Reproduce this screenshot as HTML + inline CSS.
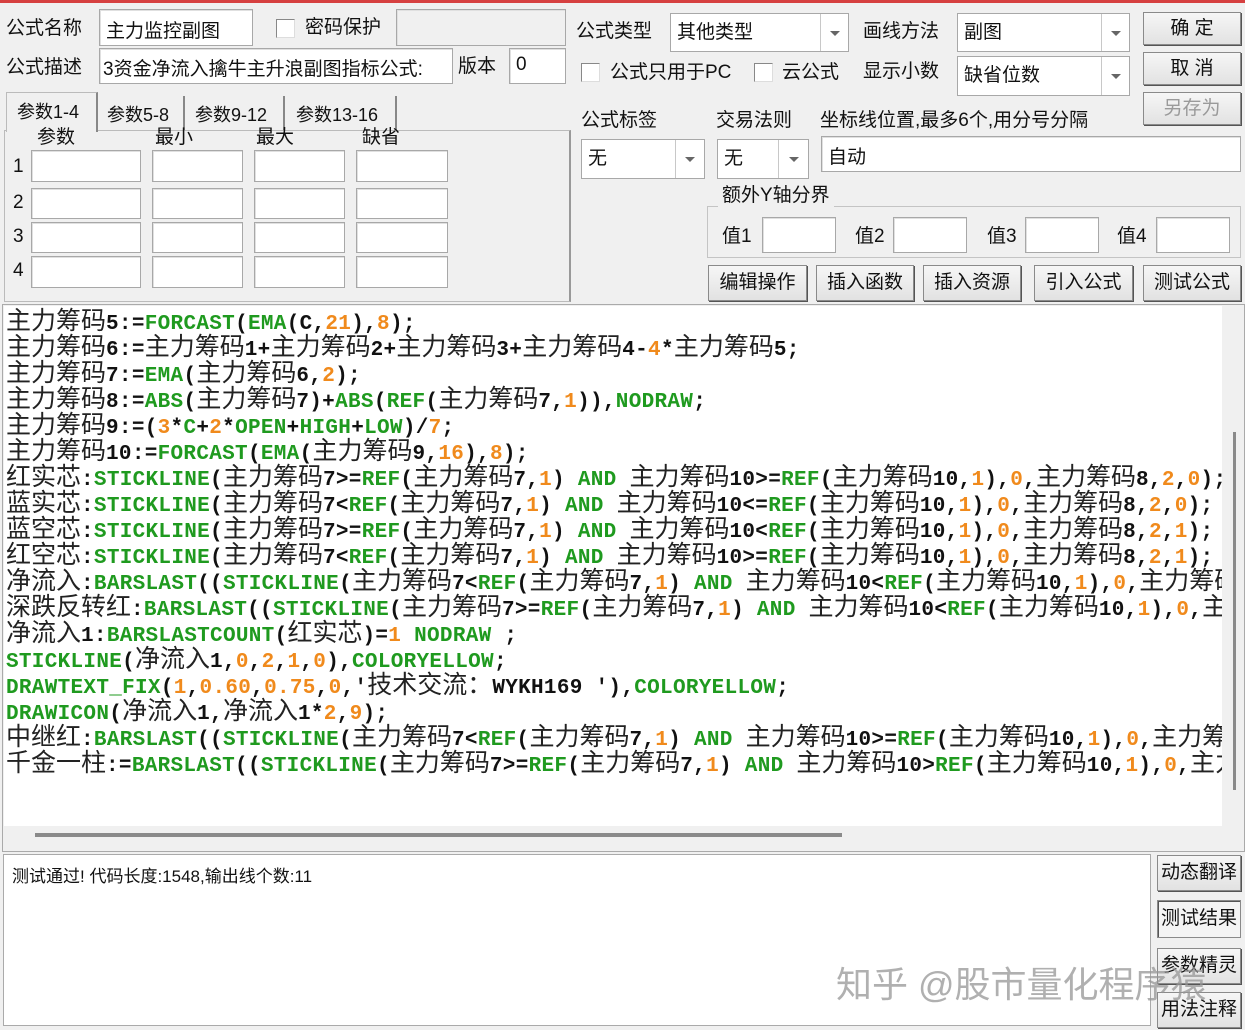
<!DOCTYPE html>
<html><head><meta charset="utf-8">
<style>
*{box-sizing:border-box;margin:0;padding:0}
body{width:1245px;height:1030px;background:#f0f0f0;font-family:"Liberation Sans","Noto Sans CJK SC",sans-serif;font-size:18px;color:#111;position:relative;overflow:hidden}
.a{position:absolute;white-space:nowrap}
.in{position:absolute;background:#fff;border:1px solid #a8a8a8;box-shadow:inset 1px 1px 0 #e0e0e0}
.lb{position:absolute;white-space:nowrap;font-size:19px;line-height:22px}
.cb{position:absolute;width:19px;height:19px;background:#fff;border:1px solid #888;border-right-color:#ddd;border-bottom-color:#ddd}
.combo{position:absolute;background:#fff;border:1px solid #a8a8a8;font-size:19px;padding-left:6px}
.combo .ar{position:absolute;right:0;top:0;bottom:0;border-left:1px solid #c8c8c8;background:#fff}
.combo .ar:after{content:"";position:absolute;left:50%;top:50%;margin:-2px 0 0 -5px;border:5px solid transparent;border-top:5px solid #666;border-bottom:0}
.btn{position:absolute;background:linear-gradient(#f6f6f6,#e2e2e2);border:1px solid #8a8a8a;box-shadow:1px 1px 0 #555;font-size:19px;text-align:center}
.code{position:absolute;left:4px;top:306px;width:1218px;height:520px;background:#fff;overflow:hidden}
.ln{height:26px;line-height:26px;white-space:nowrap;font-family:"Liberation Mono",monospace;font-weight:bold;font-size:21px;letter-spacing:.3px;color:#111;padding-left:2px}
.ln c{font-family:"Noto Sans CJK SC",sans-serif;font-weight:normal;font-size:25px;letter-spacing:0;color:#222}
.ln g{color:#1f9a1f}.ln o{color:#f08a1c}
</style></head><body>
<div class="a" style="left:0;top:0;width:1245px;height:3px;background:#d64040"></div>

<div class="lb" style="left:6px;top:18px">公式名称</div>
<div class="in" style="left:99px;top:9px;width:154px;height:37px"><span class="a" style="left:6px;top:6px;font-size:19px">主力监控副图</span></div>
<div class="cb" style="left:276px;top:19px"></div>
<div class="lb" style="left:305px;top:17px">密码保护</div>
<div class="in" style="left:396px;top:9px;width:170px;height:37px;background:#f0f0f0"></div>
<div class="lb" style="left:6px;top:57px">公式描述</div>
<div class="in" style="left:99px;top:48px;width:354px;height:36px;overflow:hidden"><span class="a" style="left:3px;top:5px;font-size:19px">3资金净流入擒牛主升浪副图指标公式:</span></div>
<div class="lb" style="left:458px;top:56px">版本</div>
<div class="in" style="left:509px;top:48px;width:57px;height:36px"><span class="a" style="left:6px;top:5px;font-size:19px">0</span></div>

<div class="a" style="left:4px;top:130px;width:567px;height:172px;border:1px solid #bbb;border-right:2px solid #999;background:#f0f0f0"></div>
<div class="a" style="left:6px;top:92px;width:92px;height:40px;background:#f0f0f0;border:1px solid #bbb;border-bottom:0;border-right:2px solid #888;font-size:18px;padding:5px 0 0 10px">参数1-4</div>
<div class="a" style="left:100px;top:96px;width:85px;height:34px;border-right:2px solid #888;font-size:18px;padding:5px 0 0 7px">参数5-8</div>
<div class="a" style="left:187px;top:96px;width:98px;height:34px;border-right:2px solid #888;font-size:18px;padding:5px 0 0 8px">参数9-12</div>
<div class="a" style="left:287px;top:96px;width:110px;height:34px;border-right:2px solid #888;font-size:18px;padding:5px 0 0 9px">参数13-16</div>
<div class="lb" style="left:37px;top:127px">参数</div>
<div class="lb" style="left:155px;top:127px">最小</div>
<div class="lb" style="left:256px;top:127px">最大</div>
<div class="lb" style="left:362px;top:127px">缺省</div>
<div class="lb" style="left:13px;top:156px">1</div>
<div class="lb" style="left:13px;top:192px">2</div>
<div class="lb" style="left:13px;top:226px">3</div>
<div class="lb" style="left:13px;top:260px">4</div>
<div class="in" style="left:31px;top:150px;width:110px;height:32px"></div><div class="in" style="left:152px;top:150px;width:91px;height:32px"></div><div class="in" style="left:254px;top:150px;width:91px;height:32px"></div><div class="in" style="left:356px;top:150px;width:92px;height:32px"></div>
<div class="in" style="left:31px;top:188px;width:110px;height:31px"></div><div class="in" style="left:152px;top:188px;width:91px;height:31px"></div><div class="in" style="left:254px;top:188px;width:91px;height:31px"></div><div class="in" style="left:356px;top:188px;width:92px;height:31px"></div>
<div class="in" style="left:31px;top:222px;width:110px;height:31px"></div><div class="in" style="left:152px;top:222px;width:91px;height:31px"></div><div class="in" style="left:254px;top:222px;width:91px;height:31px"></div><div class="in" style="left:356px;top:222px;width:92px;height:31px"></div>
<div class="in" style="left:31px;top:256px;width:110px;height:32px"></div><div class="in" style="left:152px;top:256px;width:91px;height:32px"></div><div class="in" style="left:254px;top:256px;width:91px;height:32px"></div><div class="in" style="left:356px;top:256px;width:92px;height:32px"></div>

<div class="lb" style="left:576px;top:21px">公式类型</div>
<div class="combo" style="left:670px;top:13px;width:179px;height:39px;line-height:37px">其他类型<span class="ar" style="width:28px"></span></div>
<div class="lb" style="left:863px;top:21px">画线方法</div>
<div class="combo" style="left:957px;top:13px;width:173px;height:39px;line-height:37px">副图<span class="ar" style="width:28px"></span></div>
<div class="btn" style="left:1143px;top:12px;width:98px;height:33px;line-height:31px">确 定</div>
<div class="btn" style="left:1143px;top:52px;width:98px;height:33px;line-height:31px">取 消</div>
<div class="btn" style="left:1143px;top:92px;width:98px;height:33px;line-height:31px;color:#9a9a9a">另存为</div>
<div class="cb" style="left:581px;top:63px"></div>
<div class="lb" style="left:610px;top:62px">公式只用于PC</div>
<div class="cb" style="left:754px;top:63px"></div>
<div class="lb" style="left:782px;top:62px">云公式</div>
<div class="lb" style="left:863px;top:61px">显示小数</div>
<div class="combo" style="left:957px;top:56px;width:173px;height:40px;line-height:38px">缺省位数<span class="ar" style="width:28px"></span></div>
<div class="lb" style="left:581px;top:110px">公式标签</div>
<div class="lb" style="left:716px;top:110px">交易法则</div>
<div class="lb" style="left:820px;top:110px">坐标线位置,最多6个,用分号分隔</div>
<div class="combo" style="left:581px;top:139px;width:124px;height:40px;line-height:38px">无<span class="ar" style="width:29px"></span></div>
<div class="combo" style="left:717px;top:139px;width:92px;height:40px;line-height:38px">无<span class="ar" style="width:30px"></span></div>
<div class="in" style="left:821px;top:136px;width:420px;height:36px"><span class="a" style="left:6px;top:5px;font-size:19px">自动</span></div>
<div class="a" style="left:707px;top:206px;width:534px;height:52px;border:1px solid #c4c4c4"></div>
<div class="lb" style="left:718px;top:185px;background:#f0f0f0;padding:0 4px">额外Y轴分界</div>
<div class="lb" style="left:722px;top:226px">值1</div><div class="in" style="left:762px;top:217px;width:74px;height:36px"></div>
<div class="lb" style="left:855px;top:226px">值2</div><div class="in" style="left:893px;top:217px;width:74px;height:36px"></div>
<div class="lb" style="left:987px;top:226px">值3</div><div class="in" style="left:1025px;top:217px;width:74px;height:36px"></div>
<div class="lb" style="left:1117px;top:226px">值4</div><div class="in" style="left:1156px;top:217px;width:74px;height:36px"></div>
<div class="btn" style="left:708px;top:265px;width:99px;height:36px;line-height:34px">编辑操作</div>
<div class="btn" style="left:816px;top:265px;width:98px;height:36px;line-height:34px">插入函数</div>
<div class="btn" style="left:923px;top:265px;width:98px;height:36px;line-height:34px">插入资源</div>
<div class="btn" style="left:1034px;top:265px;width:99px;height:36px;line-height:34px">引入公式</div>
<div class="btn" style="left:1143px;top:265px;width:98px;height:36px;line-height:34px">测试公式</div>

<div class="a" style="left:2px;top:304px;width:1243px;height:548px;border:1px solid #aaa;background:#f0f0f0"></div>
<div class="code">
<div class="ln"><c>主力筹码</c>5:=<g>FORCAST</g>(<g>EMA</g>(C,<o>21</o>),<o>8</o>);</div>
<div class="ln"><c>主力筹码</c>6:=<c>主力筹码</c>1+<c>主力筹码</c>2+<c>主力筹码</c>3+<c>主力筹码</c>4-<o>4</o>*<c>主力筹码</c>5;</div>
<div class="ln"><c>主力筹码</c>7:=<g>EMA</g>(<c>主力筹码</c>6,<o>2</o>);</div>
<div class="ln"><c>主力筹码</c>8:=<g>ABS</g>(<c>主力筹码</c>7)+<g>ABS</g>(<g>REF</g>(<c>主力筹码</c>7,<o>1</o>)),<g>NODRAW</g>;</div>
<div class="ln"><c>主力筹码</c>9:=(<o>3</o>*<g>C</g>+<o>2</o>*<g>OPEN</g>+<g>HIGH</g>+<g>LOW</g>)/<o>7</o>;</div>
<div class="ln"><c>主力筹码</c>10:=<g>FORCAST</g>(<g>EMA</g>(<c>主力筹码</c>9,<o>16</o>),<o>8</o>);</div>
<div class="ln"><c>红实芯</c>:<g>STICKLINE</g>(<c>主力筹码</c>7&gt;=<g>REF</g>(<c>主力筹码</c>7,<o>1</o>) <g>AND</g> <c>主力筹码</c>10&gt;=<g>REF</g>(<c>主力筹码</c>10,<o>1</o>),<o>0</o>,<c>主力筹码</c>8,<o>2</o>,<o>0</o>);</div>
<div class="ln"><c>蓝实芯</c>:<g>STICKLINE</g>(<c>主力筹码</c>7&lt;<g>REF</g>(<c>主力筹码</c>7,<o>1</o>) <g>AND</g> <c>主力筹码</c>10&lt;=<g>REF</g>(<c>主力筹码</c>10,<o>1</o>),<o>0</o>,<c>主力筹码</c>8,<o>2</o>,<o>0</o>);</div>
<div class="ln"><c>蓝空芯</c>:<g>STICKLINE</g>(<c>主力筹码</c>7&gt;=<g>REF</g>(<c>主力筹码</c>7,<o>1</o>) <g>AND</g> <c>主力筹码</c>10&lt;<g>REF</g>(<c>主力筹码</c>10,<o>1</o>),<o>0</o>,<c>主力筹码</c>8,<o>2</o>,<o>1</o>);</div>
<div class="ln"><c>红空芯</c>:<g>STICKLINE</g>(<c>主力筹码</c>7&lt;<g>REF</g>(<c>主力筹码</c>7,<o>1</o>) <g>AND</g> <c>主力筹码</c>10&gt;=<g>REF</g>(<c>主力筹码</c>10,<o>1</o>),<o>0</o>,<c>主力筹码</c>8,<o>2</o>,<o>1</o>);</div>
<div class="ln"><c>净流入</c>:<g>BARSLAST</g>((<g>STICKLINE</g>(<c>主力筹码</c>7&lt;<g>REF</g>(<c>主力筹码</c>7,<o>1</o>) <g>AND</g> <c>主力筹码</c>10&lt;<g>REF</g>(<c>主力筹码</c>10,<o>1</o>),<o>0</o>,<c>主力筹码</c>8</div>
<div class="ln"><c>深跌反转红</c>:<g>BARSLAST</g>((<g>STICKLINE</g>(<c>主力筹码</c>7&gt;=<g>REF</g>(<c>主力筹码</c>7,<o>1</o>) <g>AND</g> <c>主力筹码</c>10&lt;<g>REF</g>(<c>主力筹码</c>10,<o>1</o>),<o>0</o>,<c>主力</c></div>
<div class="ln"><c>净流入</c>1:<g>BARSLASTCOUNT</g>(<c>红实芯</c>)=<o>1</o> <g>NODRAW</g> ;</div>
<div class="ln"><g>STICKLINE</g>(<c>净流入</c>1,<o>0</o>,<o>2</o>,<o>1</o>,<o>0</o>),<g>COLORYELLOW</g>;</div>
<div class="ln"><g>DRAWTEXT_FIX</g>(<o>1</o>,<o>0.60</o>,<o>0.75</o>,<o>0</o>,'<c>技术交流：</c>WYKH169 '),<g>COLORYELLOW</g>;</div>
<div class="ln"><g>DRAWICON</g>(<c>净流入</c>1,<c>净流入</c>1*<o>2</o>,<o>9</o>);</div>
<div class="ln"><c>中继红</c>:<g>BARSLAST</g>((<g>STICKLINE</g>(<c>主力筹码</c>7&lt;<g>REF</g>(<c>主力筹码</c>7,<o>1</o>) <g>AND</g> <c>主力筹码</c>10&gt;=<g>REF</g>(<c>主力筹码</c>10,<o>1</o>),<o>0</o>,<c>主力筹码</c></div>
<div class="ln"><c>千金一柱</c>:=<g>BARSLAST</g>((<g>STICKLINE</g>(<c>主力筹码</c>7&gt;=<g>REF</g>(<c>主力筹码</c>7,<o>1</o>) <g>AND</g> <c>主力筹码</c>10&gt;<g>REF</g>(<c>主力筹码</c>10,<o>1</o>),<o>0</o>,<c>主力</c></div>
</div>
<div class="a" style="left:1233px;top:432px;width:3px;height:358px;background:#8a8a8a"></div>
<div class="a" style="left:35px;top:833px;width:807px;height:4px;background:#8a8a8a"></div>

<div class="a" style="left:3px;top:854px;width:1148px;height:172px;background:#fff;border:1px solid #aaa"></div>
<div class="a" style="left:12px;top:862px;font-size:17px">测试通过! 代码长度:1548,输出线个数:11</div>
<div class="btn" style="left:1157px;top:855px;width:84px;height:36px;line-height:34px">动态翻译</div>
<div class="btn" style="left:1157px;top:900px;width:84px;height:38px;line-height:36px;box-shadow:inset 1px 1px 0 #555;background:#f4f4f4">测试结果</div>
<div class="btn" style="left:1157px;top:948px;width:84px;height:36px;line-height:34px">参数精灵</div>
<div class="btn" style="left:1157px;top:992px;width:84px;height:36px;line-height:34px">用法注释</div>
<div class="a" style="left:836px;top:956px;font-size:36px;color:rgba(150,150,150,.75)">知乎 @股市量化程序猿</div>
</body></html>
